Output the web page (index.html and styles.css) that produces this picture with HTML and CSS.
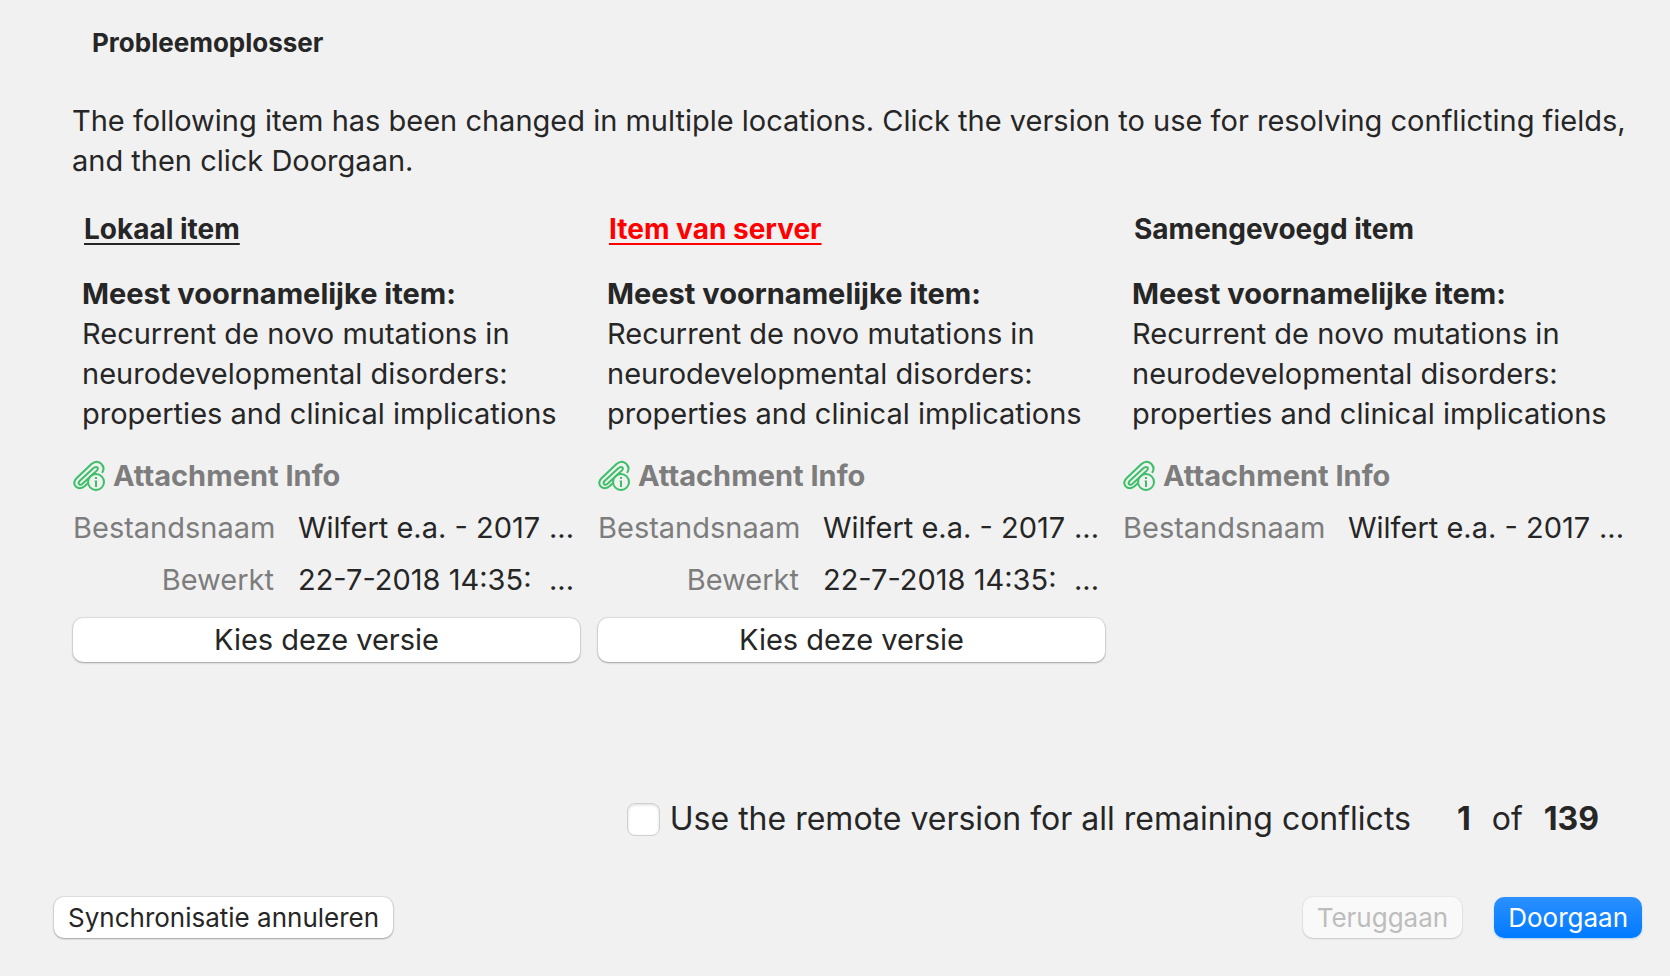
FILE: index.html
```
<!DOCTYPE html>
<html lang="nl">
<head>
<meta charset="utf-8">
<title>Probleemoplosser</title>
<link rel="stylesheet" href="styles.css">
</head>
<body>
<svg class="defs" aria-hidden="true">
  <symbol id="attachment" viewBox="0 0 32 32">
    <g fill="none" stroke="#3dbf68" stroke-width="2" stroke-linecap="butt" stroke-linejoin="round">
      <path d="M14.500 23.500L11.500 26.200Q6.500 30 2.800 26.500Q-0.700 22.600 3.500 18.300L18.500 4Q23.500 -0.300 28 3.500Q32.600 8 29 12.800"/>
      <path d="M9.500 23.800L22 12.300Q25.800 9.300 24.600 7.600Q22.800 6 20.300 8.200L6.800 20.800Q4.900 22.800 6 24.200Q7.500 25.500 9.500 23.800"/>
      <circle cx="23" cy="22" r="8"/>
    </g>
    <path fill="#3dbf68" d="M22 17h2v2h-2zM21.500 20.500H24V27h-2v-5.500h-.5z"/>
  </symbol>
</svg>
<main class="dialog">
  <h1 class="title">Probleemoplosser</h1>
  <p class="intro">The following item has been changed in multiple locations. Click the version to use for resolving conflicting fields, and then click Doorgaan.</p>
  <div class="versions">
    <section class="version">
      <h2 class="heading chosen">Lokaal item</h2>
      <p class="parent"><strong>Meest voornamelijke item:</strong><br>Recurrent de novo mutations in neurodevelopmental disorders: properties and clinical implications</p>
      <h3 class="kind"><svg class="icon"><use href="#attachment"/></svg>Attachment Info</h3>
      <dl class="fields">
        <dt>Bestandsnaam</dt><dd><span>Wilfert e.a. - 2017</span><span>...</span></dd>
        <dt>Bewerkt</dt><dd><span>22-7-2018 14:35:</span><span>...</span></dd>
      </dl>
      <button class="button choose" type="button">Kies deze versie</button>
    </section>
    <section class="version">
      <h2 class="heading chosen conflict">Item van server</h2>
      <p class="parent"><strong>Meest voornamelijke item:</strong><br>Recurrent de novo mutations in neurodevelopmental disorders: properties and clinical implications</p>
      <h3 class="kind"><svg class="icon"><use href="#attachment"/></svg>Attachment Info</h3>
      <dl class="fields">
        <dt>Bestandsnaam</dt><dd><span>Wilfert e.a. - 2017</span><span>...</span></dd>
        <dt>Bewerkt</dt><dd><span>22-7-2018 14:35:</span><span>...</span></dd>
      </dl>
      <button class="button choose" type="button">Kies deze versie</button>
    </section>
    <section class="version">
      <h2 class="heading">Samengevoegd item</h2>
      <p class="parent"><strong>Meest voornamelijke item:</strong><br>Recurrent de novo mutations in neurodevelopmental disorders: properties and clinical implications</p>
      <h3 class="kind"><svg class="icon"><use href="#attachment"/></svg>Attachment Info</h3>
      <dl class="fields">
        <dt>Bestandsnaam</dt><dd><span>Wilfert e.a. - 2017</span><span>...</span></dd>
      </dl>
    </section>
  </div>
  <div class="progress">
    <label class="remaining"><input class="check" type="checkbox">Use the remote version for all remaining conflicts</label>
    <div class="count"><strong>1</strong><span>of</span><strong>139</strong></div>
  </div>
  <footer class="actions">
    <button class="button cancel" type="button">Synchronisatie annuleren</button>
    <button class="button" type="button" disabled>Teruggaan</button>
    <button class="button primary" type="button">Doorgaan</button>
  </footer>
</main>
</body>
</html>
```
FILE: styles.css
```
* { box-sizing: border-box; }

body {
  margin: 0;
  background: #f1f1f1;
  color: #262626;
  font-family: Inter, "Liberation Sans", sans-serif;
  font-size: 29px;
  line-height: 40px;
}

h1, h2, h3, p, dl, dd { margin: 0; }
strong { font-weight: 700; }
.defs { display: none; }

.dialog {
  display: flex;
  flex-direction: column;
  min-height: 100vh;
  padding: 23px 28px 38px 54px;
}

.title {
  padding-left: 38px;
  font-size: 26px;
  line-height: 40px;
}

.intro { padding: 38px 0 0 18px; }

.versions {
  display: grid;
  grid-template-columns: repeat(3, minmax(0, 1fr));
  gap: 18px;
  padding: 28px 12px 0 19px;
}

.heading {
  padding-left: 11px;
  font-size: 28px;
  line-height: 40px;
}
.chosen {
  text-decoration: underline;
  text-decoration-thickness: 2px;
  text-underline-offset: 4px;
}
.conflict { color: #f00; }

.parent { padding: 25px 9px 0; }

.kind {
  display: flex;
  align-items: center;
  gap: 8px;
  padding-top: 22px;
  color: #7d7d7d;
  font-size: 29px;
  font-weight: 700;
}
.icon { width: 32px; height: 32px; }

.fields {
  display: grid;
  grid-template-columns: 201px 1fr;
  gap: 12px 24px;
  padding: 12px 6px 0 0;
}
.fields dt {
  color: #7d7d7d;
  text-align: right;
}
.fields dd {
  display: flex;
  justify-content: space-between;
  white-space: nowrap;
}

.button {
  height: 41px;
  padding: 0 14px;
  border: 0;
  border-radius: 10px;
  background: #fff;
  box-shadow: 0 0 1px 1px rgba(0, 0, 0, .08), 0 1px 2px rgba(0, 0, 0, .28);
  color: inherit;
  font: inherit;
  font-size: 26px;
}
.choose {
  width: 100%;
  height: 44px;
  margin-top: 18px;
  font-size: 29px;
}

.progress {
  display: flex;
  justify-content: flex-end;
  align-items: center;
  gap: 46px;
  margin-top: auto;
  padding: 40px 43px 0 0;
  font-size: 32px;
}
.remaining {
  display: flex;
  align-items: center;
  gap: 10px;
}
.check {
  appearance: none;
  width: 33px;
  height: 33px;
  margin: 0;
  border: 1px solid #d0d0d0;
  border-radius: 8px;
  background: #fff;
  box-shadow: inset 0 1px 3px rgba(0, 0, 0, .15);
}
.count {
  display: flex;
  gap: 21px;
}

.actions {
  display: flex;
  gap: 32px;
  padding-top: 58px;
}
.cancel { margin-right: auto; }
.button:disabled {
  background: #f9f9f9;
  box-shadow: 0 0 1px 1px rgba(0, 0, 0, .03), 0 1px 2px rgba(0, 0, 0, .14);
  color: #bdbdbd;
}
.primary {
  background: linear-gradient(#2b90ff, #007aff);
  box-shadow: 0 1px 2px rgba(0, 122, 255, .3);
  color: #fff;
}
```
